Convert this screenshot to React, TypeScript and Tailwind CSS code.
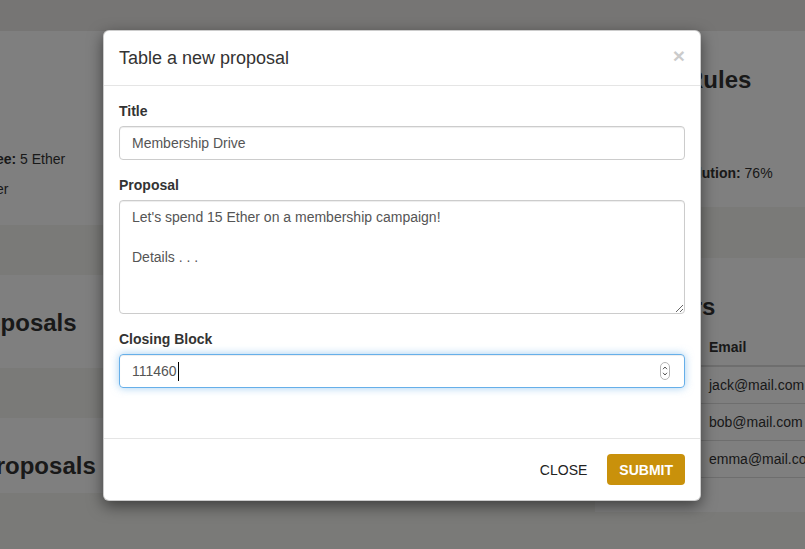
import React from 'react'

const members = [
  { name: 'Jack', email: 'jack@mail.com' },
  { name: 'Bob', email: 'bob@mail.com' },
  { name: 'Emma', email: 'emma@mail.com' },
]

function Spinner() {
  return (
    <svg width="10" height="18" viewBox="0 0 10 18" aria-hidden>
      <rect x="0.5" y="0.5" width="9" height="17" rx="4.5" fill="#fff" stroke="#b5b5b5" />
      <path d="M3 7.2 L5 5 L7 7.2" fill="none" stroke="#555" strokeWidth="1" />
      <path d="M3 10.8 L5 13 L7 10.8" fill="none" stroke="#555" strokeWidth="1" />
    </svg>
  )
}

export default function App() {
  return (
    <div className="relative h-[549px] w-[805px] overflow-hidden bg-[#f5f4f0] font-['Liberation_Sans',Arial,sans-serif] text-[14px] leading-5 text-[#333]">
      {/* page behind the dialog */}
      <div className="h-[31px] bg-[#ecebe8]" />
      <div className="-ml-[114px] flex gap-[17px]">
        <div className="w-[692px] shrink-0">
          <section className="mb-[50px] h-[194px] bg-white px-[15px] pt-[35px]">
            <h3 className="text-[24px] font-bold leading-[26px]">DAO</h3>
            <div className="mt-[57px]">
              <p className="mb-[10px]">
                <b>Membership Fee:</b> 5 Ether
              </p>
              <p>
                <b>Balance:</b> 4 Ether
              </p>
            </div>
          </section>
          <section className="mb-[50px] h-[93px] bg-white px-[15px] pt-[35px]">
            <h3 className="text-[24px] font-bold leading-[26px]">Your Proposals</h3>
          </section>
          <section className="h-[75px] bg-white px-[15px] pt-[35px]">
            <h3 className="text-[24px] font-bold leading-[26px]">Active Proposals</h3>
          </section>
        </div>
        <div className="w-[400px] shrink-0">
          <section className="mb-[51px] h-[176px] bg-white px-[15px] pt-[36px]">
            <h3 className="text-[24px] font-bold leading-[26px]">Board Rules</h3>
            <div className="mt-[10px]">
              <p className="mb-[10px]">
                <b>Members:</b> 3
              </p>
              <p className="mb-[10px]">
                <b>Min. votes:</b> 2
              </p>
              <p>
                <b>Quorum resolution:</b> 76%
              </p>
            </div>
          </section>
          <section className="h-[254px] bg-white px-[15px] pt-[36px]">
            <h3 className="mb-[9px] text-[24px] font-bold leading-[26px]">Members</h3>
            <table className="w-full border-collapse text-left">
              <thead>
                <tr>
                  <th className="w-[91px] border-b-2 border-[#ddd] px-[8px] py-[8px]">Name</th>
                  <th className="border-b-2 border-[#ddd] px-[8px] py-[8px]">Email</th>
                </tr>
              </thead>
              <tbody>
                {members.map((m) => (
                  <tr key={m.email}>
                    <td className="border-b border-[#ddd] px-[8px] py-[8px]">{m.name}</td>
                    <td className="whitespace-nowrap border-b border-[#ddd] px-[8px] py-[8px]">{m.email}</td>
                  </tr>
                ))}
              </tbody>
            </table>
          </section>
        </div>
      </div>

      {/* backdrop */}
      <div className="absolute inset-0 bg-black/50" />

      {/* dialog */}
      <div className="absolute left-[103px] top-[30px] w-[598px] rounded-[6px] border border-black/20 bg-white shadow-[0_5px_15px_rgba(0,0,0,0.5)]">
        <div className="flex items-start justify-between border-b border-[#e5e5e5] p-[15px]">
          <h4 className="text-[18px] leading-[24px] text-[#333]">Table a new proposal</h4>
          <button className="-mt-[1px] text-[21px] font-bold leading-[21px] text-black opacity-20">×</button>
        </div>

        <div className="px-[15px] pb-[50px] pt-[15px]">
          <div className="mb-[15px]">
            <label className="mb-[5px] block font-bold">Title</label>
            <input
              readOnly
              value="Membership Drive"
              className="block h-[34px] w-full rounded-[4px] border border-[#ccc] px-[12px] py-[6px] text-[14px] text-[#555] shadow-[inset_0_1px_1px_rgba(0,0,0,0.075)] outline-none"
            />
          </div>
          <div className="mb-[15px]">
            <label className="mb-[5px] block font-bold">Proposal</label>
            <textarea
              readOnly
              rows={5}
              value={"Let's spend 15 Ether on a membership campaign!\n\nDetails . . ."}
              className="block h-[114px] w-full rounded-[4px] border border-[#ccc] px-[12px] py-[6px] text-[14px] leading-5 text-[#555] shadow-[inset_0_1px_1px_rgba(0,0,0,0.075)] outline-none"
            />
          </div>
          <div>
            <label className="mb-[5px] block font-bold">Closing Block</label>
            <div className="relative flex h-[34px] w-full items-center rounded-[4px] border border-[#66afe9] px-[12px] text-[14px] text-[#555] shadow-[inset_0_1px_1px_rgba(0,0,0,0.075),0_0_8px_rgba(102,175,233,0.6)]">
              <span>111460</span>
              <span className="ml-[1px] h-[19px] w-px bg-black" />
              <span className="absolute right-[14px] top-[7px]">
                <Spinner />
              </span>
            </div>
          </div>
        </div>

        <div className="flex items-center justify-end gap-[8px] border-t border-[#e5e5e5] p-[15px]">
          <button className="h-[31px] px-[12px] text-[14px] uppercase text-[#222]">Close</button>
          <button className="h-[31px] rounded-[4px] bg-[#c9910b] px-[12px] text-[14px] font-bold uppercase text-white">
            Submit
          </button>
        </div>
      </div>
    </div>
  )
}
